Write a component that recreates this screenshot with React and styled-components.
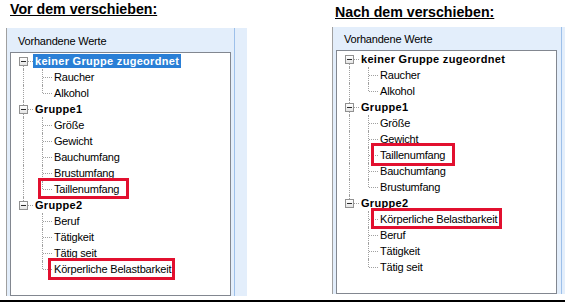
import React from 'react';
import styled, { createGlobalStyle } from 'styled-components';

const GlobalStyle = createGlobalStyle`
  html, body {
    margin: 0;
    padding: 0;
    background: #fff;
  }
  body {
    width: 565px;
    height: 302px;
    overflow: hidden;
    font-family: "Liberation Sans", Arial, sans-serif;
  }
`;

const Page = styled.div`
  display: flex;
  gap: 85px;
  height: 300px;
  padding-left: 6px;
  border-bottom: 2px solid #000;
  overflow: hidden;
`;

const Column = styled.section`
  display: flex;
  flex-direction: column;
  flex: none;
  width: ${(p) => p.$width}px;
  overflow: hidden;
`;

const Title = styled.h2`
  margin: 0;
  box-sizing: border-box;
  height: ${(p) => p.$height}px;
  padding: ${(p) => p.$top}px 0 0 ${(p) => p.$indent}px;
  font: bold 14.2px/17px "Liberation Sans", Arial, sans-serif;
  text-decoration: underline;
  color: #000;
  white-space: nowrap;
`;

const Panel = styled.div`
  display: flex;
  height: ${(p) => p.$height}px;
  border-left: 1px solid #a0a0a0;
  background: #e3eefb;
  overflow: hidden;
`;

const Content = styled.div`
  display: flex;
  flex-direction: column;
  flex: none;
  padding: ${(p) => p.$top}px ${(p) => p.$right}px 0 3px;
`;

const Caption = styled.div`
  height: 14px;
  margin: 0 0 4px 8px;
  font-size: 11px;
  line-height: 14px;
  letter-spacing: -0.2px;
  color: #000;
`;

const TreeBox = styled.div`
  position: relative;
  box-sizing: border-box;
  width: 221px;
  height: 260px;
  border: 1px solid #828790;
  background: #fff;
`;

const Splitter = styled.div`
  flex: none;
  width: 1px;
  background: #9dc0ea;
`;

const Strip = styled.div`
  flex: none;
  width: 12px;
`;

const Row = styled.div`
  position: relative;
  display: flex;
  align-items: center;
  height: 16px;
`;

const Guide = styled.span`
  position: relative;
  flex: none;
  align-self: stretch;
  width: ${(p) => (p.$branch ? 22 : 19)}px;

  &::before {
    content: '';
    display: ${(p) => (p.$kind === 'blank' ? 'none' : 'block')};
    position: absolute;
    left: 12px;
    top: ${(p) => (p.$kind === 'start' ? 8 : 0)}px;
    bottom: ${(p) => (p.$kind === 'end' ? 8 : 0)}px;
    border-left: 1px dotted #a0a0a0;
  }

  &::after {
    content: '';
    display: ${(p) => (p.$branch ? 'block' : 'none')};
    position: absolute;
    left: 13px;
    top: 8px;
    width: 9px;
    border-top: 1px dotted #a0a0a0;
  }
`;

const Expander = styled.span`
  position: absolute;
  z-index: 1;
  left: 8px;
  top: 4px;
  box-sizing: border-box;
  width: 9px;
  height: 9px;
  border: 1px solid #919191;
  background: linear-gradient(#ffffff, #e4e4e4);

  &::after {
    content: '';
    position: absolute;
    left: 1px;
    top: 3px;
    width: 5px;
    height: 1px;
    background: #2b2b2b;
  }
`;

const Label = styled.span`
  height: 14px;
  padding: 0 2px;
  font-size: 11px;
  line-height: 14px;
  font-weight: ${(p) => (p.$group ? 'bold' : 'normal')};
  letter-spacing: ${(p) => (p.$group ? '0.3px' : '-0.2px')};
  white-space: nowrap;
  color: ${(p) => (p.$selected ? '#fff' : '#000')};
  background: ${(p) => (p.$selected ? '#2a7fd6' : 'transparent')};
`;

const Mark = styled.span`
  position: absolute;
  box-sizing: border-box;
  border: 3px solid #e2102f;
  pointer-events: none;
`;

const flatten = (groups) => {
  const rows = [];
  groups.forEach((g, i) => {
    const lastGroup = i === groups.length - 1;
    const kind = i === 0 ? 'start' : lastGroup ? 'end' : 'tee';
    rows.push({ text: g.text, group: true, selected: g.selected, guides: [kind] });
    g.children.forEach((c, j) => {
      const lastChild = j === g.children.length - 1;
      rows.push({
        text: c.text,
        mark: c.mark,
        guides: [lastGroup ? 'blank' : 'pass', lastChild ? 'end' : 'tee'],
      });
    });
  });
  return rows;
};

const TreeRow = ({ row }) => (
  <Row>
    {row.guides.map((kind, i) => {
      const branch = i === row.guides.length - 1;
      return (
        <Guide key={i} $kind={kind} $branch={branch}>
          {branch && row.group && <Expander />}
        </Guide>
      );
    })}
    <Label $group={row.group} $selected={row.selected}>
      {row.text}
    </Label>
    {row.mark && (
      <Mark
        style={{
          left: row.mark.left,
          top: row.mark.top,
          width: row.mark.width,
          height: row.mark.height,
        }}
      />
    )}
  </Row>
);

const beforeTree = [
  {
    text: 'keiner Gruppe zugeordnet',
    selected: true,
    children: [{ text: 'Raucher' }, { text: 'Alkohol' }],
  },
  {
    text: 'Gruppe1',
    children: [
      { text: 'Größe' },
      { text: 'Gewicht' },
      { text: 'Bauchumfang' },
      { text: 'Brustumfang' },
      { text: 'Taillenumfang', mark: { left: 27, top: -3, width: 91, height: 21 } },
    ],
  },
  {
    text: 'Gruppe2',
    children: [
      { text: 'Beruf' },
      { text: 'Tätigkeit' },
      { text: 'Tätig seit' },
      { text: 'Körperliche Belastbarkeit', mark: { left: 37, top: -3, width: 127, height: 22 } },
    ],
  },
];

const afterTree = [
  {
    text: 'keiner Gruppe zugeordnet',
    children: [{ text: 'Raucher' }, { text: 'Alkohol' }],
  },
  {
    text: 'Gruppe1',
    children: [
      { text: 'Größe' },
      { text: 'Gewicht' },
      { text: 'Taillenumfang', mark: { left: 34, top: -4, width: 84, height: 23 } },
      { text: 'Bauchumfang' },
      { text: 'Brustumfang' },
    ],
  },
  {
    text: 'Gruppe2',
    children: [
      { text: 'Körperliche Belastbarkeit', mark: { left: 34, top: -3, width: 131, height: 21 } },
      { text: 'Beruf' },
      { text: 'Tätigkeit' },
      { text: 'Tätig seit' },
    ],
  },
];

const Snapshot = ({ title, tree, width, titleHeight, titleTop, titleIndent, panelHeight, padTop, padRight }) => (
  <Column $width={width}>
    <Title $height={titleHeight} $top={titleTop} $indent={titleIndent}>
      {title}
    </Title>
    <Panel $height={panelHeight}>
      <Content $top={padTop} $right={padRight}>
        <Caption>Vorhandene Werte</Caption>
        <TreeBox>
          {flatten(tree).map((row, i) => (
            <TreeRow key={i} row={row} />
          ))}
        </TreeBox>
      </Content>
      <Splitter />
      <Strip />
    </Panel>
  </Column>
);

export default function App() {
  return (
    <>
      <GlobalStyle />
      <Page>
        <Snapshot
          title="Vor dem verschieben:"
          tree={beforeTree}
          width={241}
          titleHeight={28}
          titleTop={1}
          titleIndent={4}
          panelHeight={268}
          padTop={6}
          padRight={3}
        />
        <Snapshot
          title="Nach dem verschieben:"
          tree={afterTree}
          width={233}
          titleHeight={27}
          titleTop={4}
          titleIndent={3}
          panelHeight={267}
          padTop={5}
          padRight={4}
        />
      </Page>
    </>
  );
}
